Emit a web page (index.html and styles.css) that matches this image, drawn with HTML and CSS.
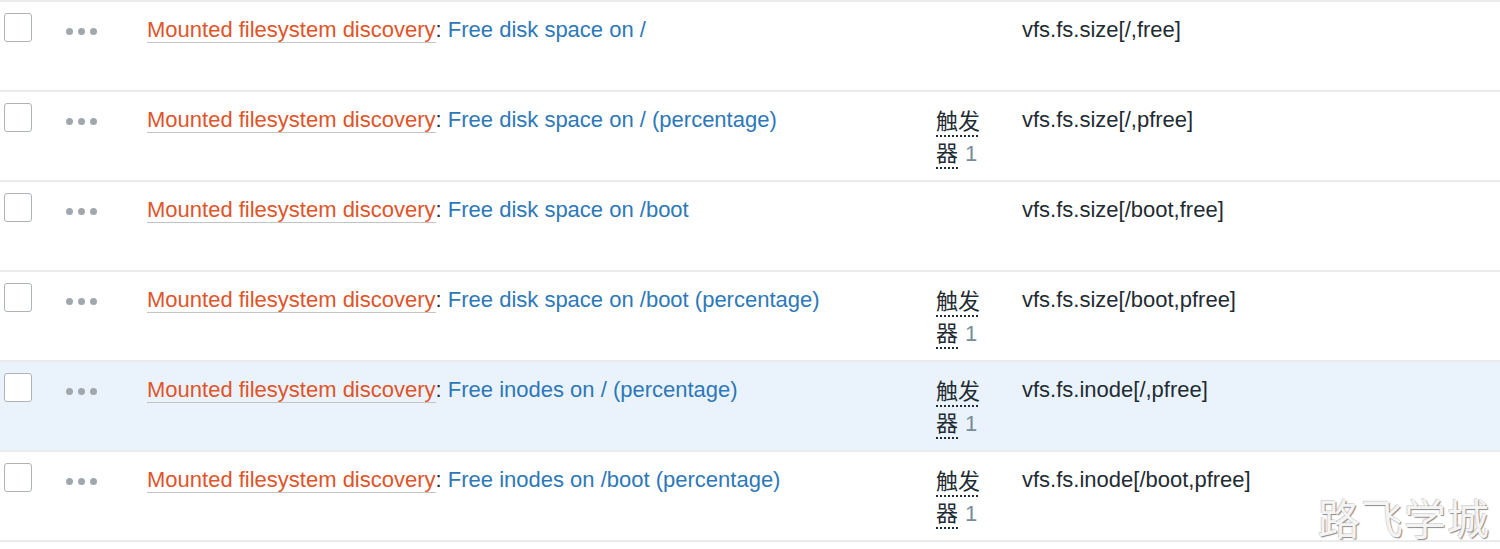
FILE: index.html
```html
<!DOCTYPE html>
<html lang="zh">
<head>
<meta charset="utf-8">
<title>Items</title>
<link rel="stylesheet" href="styles.css">
</head>
<body>
<div class="table">
  <div class="row">
    <div class="cell c-check"><span class="checkbox"></span></div>
    <div class="cell c-menu"><span class="dots"><i></i><i></i><i></i></span></div>
    <div class="cell c-name"><a class="parent">Mounted filesystem discovery</a>: <a class="item">Free disk space on /</a></div>
    <div class="cell c-trig"></div>
    <div class="cell c-key">vfs.fs.size[/,free]</div>
  </div>
  <div class="row">
    <div class="cell c-check"><span class="checkbox"></span></div>
    <div class="cell c-menu"><span class="dots"><i></i><i></i><i></i></span></div>
    <div class="cell c-name"><a class="parent">Mounted filesystem discovery</a>: <a class="item">Free disk space on / (percentage)</a></div>
    <div class="cell c-trig"><span class="trig"><a class="trig-link">触发器</a><span class="count">1</span></span></div>
    <div class="cell c-key">vfs.fs.size[/,pfree]</div>
  </div>
  <div class="row">
    <div class="cell c-check"><span class="checkbox"></span></div>
    <div class="cell c-menu"><span class="dots"><i></i><i></i><i></i></span></div>
    <div class="cell c-name"><a class="parent">Mounted filesystem discovery</a>: <a class="item">Free disk space on /boot</a></div>
    <div class="cell c-trig"></div>
    <div class="cell c-key">vfs.fs.size[/boot,free]</div>
  </div>
  <div class="row">
    <div class="cell c-check"><span class="checkbox"></span></div>
    <div class="cell c-menu"><span class="dots"><i></i><i></i><i></i></span></div>
    <div class="cell c-name"><a class="parent">Mounted filesystem discovery</a>: <a class="item">Free disk space on /boot (percentage)</a></div>
    <div class="cell c-trig"><span class="trig"><a class="trig-link">触发器</a><span class="count">1</span></span></div>
    <div class="cell c-key">vfs.fs.size[/boot,pfree]</div>
  </div>
  <div class="row row-hover">
    <div class="cell c-check"><span class="checkbox"></span></div>
    <div class="cell c-menu"><span class="dots"><i></i><i></i><i></i></span></div>
    <div class="cell c-name"><a class="parent">Mounted filesystem discovery</a>: <a class="item">Free inodes on / (percentage)</a></div>
    <div class="cell c-trig"><span class="trig"><a class="trig-link">触发器</a><span class="count">1</span></span></div>
    <div class="cell c-key">vfs.fs.inode[/,pfree]</div>
  </div>
  <div class="row">
    <div class="cell c-check"><span class="checkbox"></span></div>
    <div class="cell c-menu"><span class="dots"><i></i><i></i><i></i></span></div>
    <div class="cell c-name"><a class="parent">Mounted filesystem discovery</a>: <a class="item">Free inodes on /boot (percentage)</a></div>
    <div class="cell c-trig"><span class="trig"><a class="trig-link">触发器</a><span class="count">1</span></span></div>
    <div class="cell c-key">vfs.fs.inode[/boot,pfree]</div>
  </div>
</div>
<div class="watermark">路飞学城</div>
</body>
</html>
```
FILE: styles.css
```css
html, body {
  margin: 0;
  padding: 0;
  background: #ffffff;
}
body {
  font-family: "Liberation Sans", Arial, "Noto Sans CJK SC", sans-serif;
  font-size: 22px;
  line-height: 33px;
  color: #1f2c33;
  position: relative;
  height: 549px;
  overflow: hidden;
}
.table {
  border-top: 2px solid #ebebeb;
}
.row {
  display: grid;
  grid-template-columns: 62px 81px 789px 86px 1fr;
  height: 88px;
  border-bottom: 2px solid #ebebeb;
  background: #ffffff;
}
.row-hover {
  background: #eaf3fc;
}
.cell {
  padding: 11px 4px 0 4px;
  box-sizing: border-box;
}
.checkbox {
  display: block;
  width: 28px;
  height: 29px;
  margin-top: 0;
  box-sizing: border-box;
  border: 1px solid #aeb3b6;
  border-radius: 3px;
  background: #ffffff;
}
.dots {
  display: flex;
  gap: 5px;
  margin-top: 15px;
}
.dots i {
  display: block;
  width: 7px;
  height: 7px;
  border-radius: 50%;
  background: #a1a8ad;
}
.c-name {
  white-space: nowrap;
}
.parent {
  color: #e0542a;
  border-bottom: 1px solid #c4c4c4;
  text-decoration: none;
}
.item {
  color: #2d78b8;
  text-decoration: none;
}
.trig {
  display: block;
  width: 50px;
  font-family: "Noto Sans CJK SC", "Liberation Sans", sans-serif;
  line-height: 32px;
}
.trig-link {
  color: #1f2c33;
  text-decoration: underline dotted #1f2c33;
  text-decoration-thickness: 2px;
  text-underline-offset: 6px;
}
.count {
  color: #768d99;
  margin-left: 7px;
  font-family: "Liberation Sans", Arial, sans-serif;
}
.c-key {
  white-space: nowrap;
}
.watermark {
  position: absolute;
  right: 10px;
  bottom: 10px;
  font-family: "Noto Sans CJK SC", sans-serif;
  font-size: 42px;
  line-height: 44px;
  letter-spacing: 1px;
  color: #f4f4f4;
  text-shadow: 1px 1px 1px #8a8a8a, -1px -1px 0 #d8d8d8;
}
```
